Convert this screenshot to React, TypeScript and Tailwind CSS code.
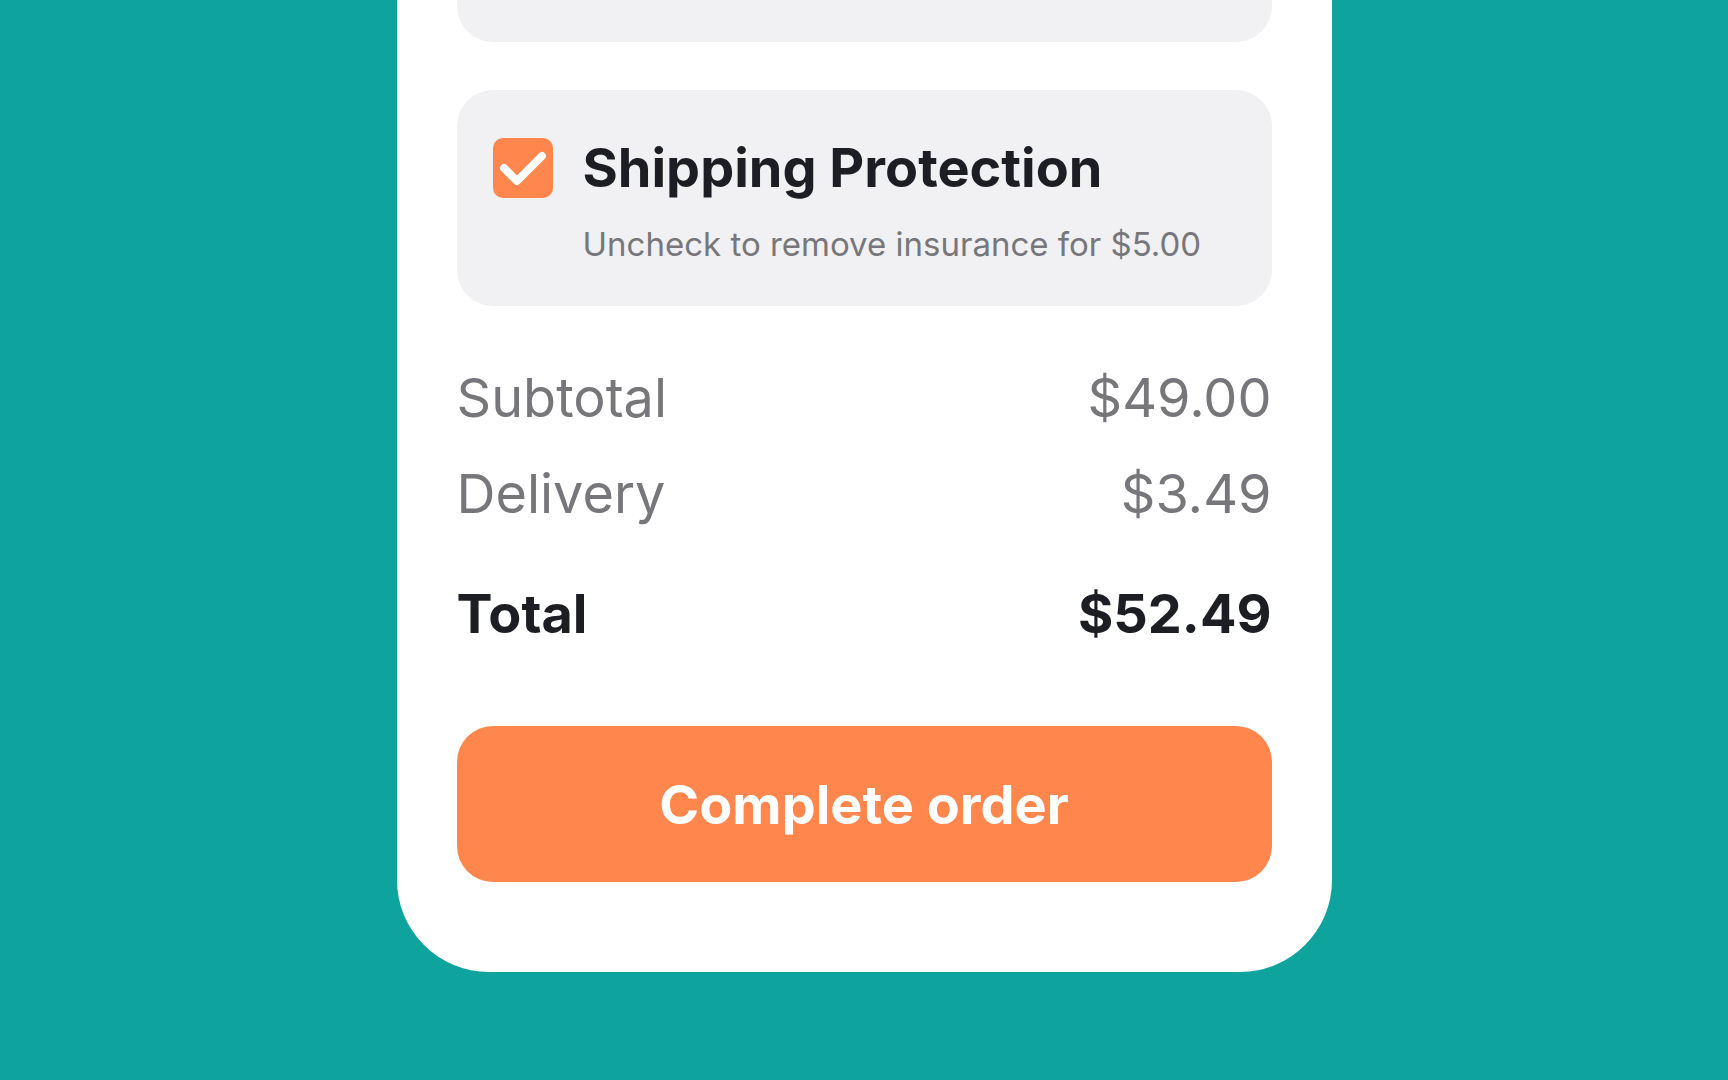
const font = { fontFamily: 'Inter, "Noto Sans", sans-serif' };

function CheckBox() {
  return (
    <div className="w-[60px] h-[60px] shrink-0 rounded-[10px] bg-[#ff864d] flex items-center justify-center">
      <svg width="60" height="60" viewBox="0 0 60 60" fill="none">
        <path d="M11 30 L24 43 L49 18" stroke="white" strokeWidth="8" strokeLinecap="round" strokeLinejoin="round" />
      </svg>
    </div>
  );
}

function Row({ label, value, bold }: { label: string; value: string; bold?: boolean }) {
  return (
    <div
      className={`flex justify-between items-center h-[64px] text-[54px] leading-[64px] ${
        bold ? 'font-bold text-[#1d1d24]' : 'text-[#77777b]'
      }`}
    >
      <span>{label}</span>
      <span>{value}</span>
    </div>
  );
}

export default function App() {
  return (
    <div className="h-[1080px] w-full bg-[#0fa39e] overflow-hidden flex flex-col justify-end items-center pb-[108px]" style={font}>
      <div className="w-[935px] bg-white rounded-b-[92px] px-[60px] pb-[90px] flex flex-col shrink-0">
        {/* cut-off section above */}
        <div className="h-[160px] bg-[#f1f1f3] rounded-b-[36px]" />

        {/* Shipping protection */}
        <div className="mt-[48px] bg-[#f1f1f3] rounded-[36px] px-[36px] pt-[48px] pb-[40px]">
          <div className="flex items-center gap-[30px]">
            <CheckBox />
            <span className="text-[54px] leading-[60px] font-bold text-[#1d1d24]">Shipping Protection</span>
          </div>
          <div className="mt-[24px] pl-[90px] text-[33px] leading-[44px] text-[#77777b]">
            Uncheck to remove insurance for $5.00
          </div>
        </div>

        {/* Totals */}
        <div className="mt-[60px] flex flex-col gap-[32px]">
          <Row label="Subtotal" value="$49.00" />
          <Row label="Delivery" value="$3.49" />
        </div>
        <div className="mt-[56px]">
          <Row label="Total" value="$52.49" bold />
        </div>

        <button className="mt-[80px] h-[156px] w-full rounded-[36px] bg-[#ff864d] text-white text-[54px] font-bold">
          Complete order
        </button>
      </div>
    </div>
  );
}
